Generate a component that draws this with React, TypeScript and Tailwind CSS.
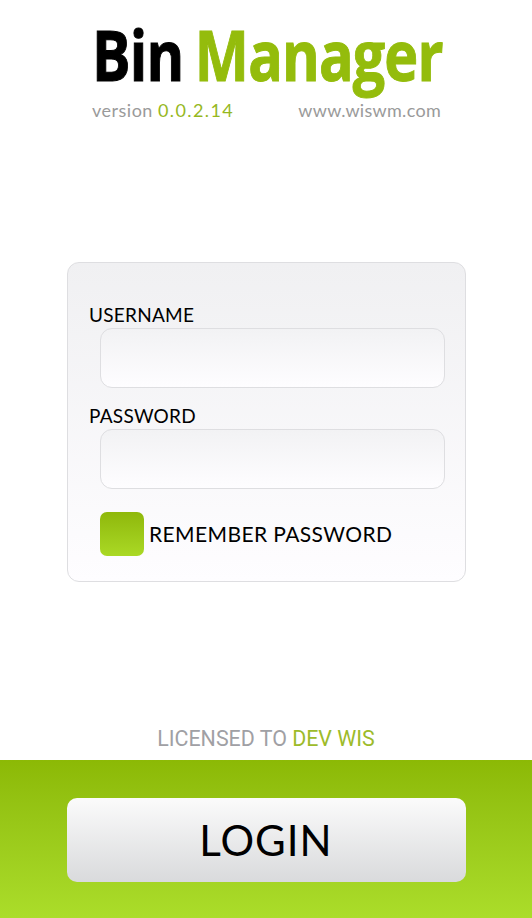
const futura = "font-['Lato','Liberation_Sans',sans-serif]";

const Field = ({ label, className }: { label: string; className?: string }) => {
  return (
    <div className={className}>
      <div className={`${futura} h-[25px] text-[19px] leading-[24px] tracking-[0.25px] text-black`}>{label}</div>
      <div className="ml-[11px] h-[60px] w-[345px] rounded-[12px] border border-[#dedee1] bg-gradient-to-b from-[#f2f2f4] to-[#fefdff]" />
    </div>
  );
};

const App = () => {
  return (
    <div className="flex h-[918px] w-[532px] flex-col overflow-hidden bg-white">
      {/* Logo */}
      <div className="h-[262px] pl-[92px] pt-[14px]">
        <div className="flex h-[80px] w-[350px] origin-left scale-x-[0.82] items-center whitespace-nowrap font-['Open_Sans',sans-serif] text-[70px] font-bold leading-[80px] tracking-[-1px] [-webkit-text-stroke:1px_currentColor]">
          <span className="text-black">Bin</span>
          <span className="ml-[14px] text-[#94bc0c]">Manager</span>
        </div>
        <div className={`${futura} mt-[4px] flex w-[349px] justify-between text-[18px] leading-[24px] text-[#9a9a9a]`}>
          <span className="tracking-[0.5px]">
            version <span className="tracking-[1.4px] text-[#96b81e]">0.0.2.14</span>
          </span>
          <span className="tracking-[0.3px]">www.wiswm.com</span>
        </div>
      </div>

      {/* Form card */}
      <div className="mx-[67px] h-[320px] w-[399px] rounded-[12px] border border-[#dedee1] bg-gradient-to-b from-[#f0f0f2] to-[#fefdff] pl-[21px] pt-[40px]">
        <Field label="USERNAME" />
        <Field label="PASSWORD" className="mt-[16px]" />
        <div className="ml-[11px] mt-[23px] flex items-center gap-[5px]">
          <div className="h-[44px] w-[44px] rounded-[7px] bg-gradient-to-b from-[#8fb80a] to-[#aad924]" />
          <span className={`${futura} text-[21px] leading-[28px] tracking-[0.4px] text-black`}>REMEMBER PASSWORD</span>
        </div>
      </div>

      <div className="mt-[144px] h-[34px] text-center font-['Roboto',sans-serif] text-[21.4px] leading-[26px] text-[#a0a0a4]">
        LICENSED TO <span className="text-[#9dbb2a]">DEV WIS</span>
      </div>

      {/* Footer */}
      <div className="flex h-[158px] items-start justify-center bg-gradient-to-b from-[#8cb905] to-[#abdd2a] pt-[38px]">
        <button className={`${futura} h-[84px] w-[399px] rounded-[10px] bg-gradient-to-b from-[#fbfbfb] to-[#d9dadc] text-[42px] tracking-[1px] text-black`}>
          LOGIN
        </button>
      </div>
    </div>
  );
};

export default App;
